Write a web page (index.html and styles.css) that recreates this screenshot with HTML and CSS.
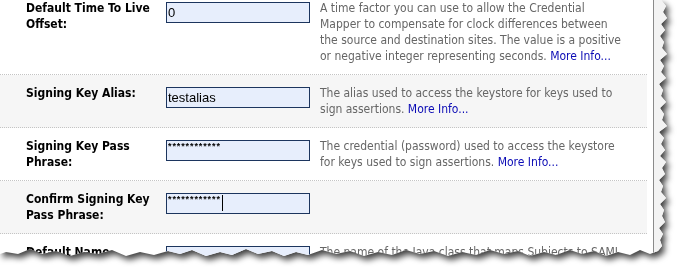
FILE: index.html
```html
<html lang="en">

<head>
  <meta charset="UTF-8">
  <meta name="viewport" content="width=device-width, initial-scale=1.0">
  <title>Credential Mapper Settings</title>
  <link rel="stylesheet" href="styles.css">
</head>

<body>
  <div class="sheet-shadow">
    <div class="sheet">
      <div class="form">
        <div class="row">
          <label class="field-label" for="ttl">Default Time To Live<br>Offset:</label>
          <div class="field"><input class="field-input" id="ttl" type="text" value="0"></div>
          <p class="field-help">A time factor you can use to allow the Credential<br>Mapper to compensate for clock differences between<br>the source and destination sites. The value is a positive<br>or negative integer representing seconds. <a href="#">More Info...</a></p>
        </div>
        <div class="row alt">
          <label class="field-label" for="alias">Signing Key Alias:</label>
          <div class="field"><input class="field-input" id="alias" type="text" value="testalias"></div>
          <p class="field-help">The alias used to access the keystore for keys used to<br>sign assertions. <a href="#">More Info...</a></p>
        </div>
        <div class="row">
          <label class="field-label" for="pass">Signing Key Pass<br>Phrase:</label>
          <div class="field"><input class="field-input pass" id="pass" type="text" value="************"></div>
          <p class="field-help">The credential (password) used to access the keystore<br>for keys used to sign assertions. <a href="#">More Info...</a></p>
        </div>
        <div class="row alt">
          <label class="field-label" for="confirm">Confirm Signing Key<br>Pass Phrase:</label>
          <div class="field"><input class="field-input pass" id="confirm" type="text" value="************"><span class="caret"></span></div>
          <p class="field-help"></p>
        </div>
        <div class="row">
          <label class="field-label" for="nameMapper">Default Name<br>Mapper Class Name:</label>
          <div class="field"><input class="field-input" id="nameMapper" type="text" value=""></div>
          <p class="field-help">The name of the Java class that maps Subjects to SAML<br>name identifiers. <a href="#">More Info...</a></p>
        </div>
      </div>
      <div class="gap"></div>
      <div class="scroll-track"></div>
    </div>
  </div>
</body>

</html>
```

FILE: styles.css
```css
body {
  margin: 0;
  background-color: white;
  overflow: hidden;
}

.sheet-shadow {
  width: 679px;
  height: 268px;
  filter: drop-shadow(3px 4px 3px rgba(0, 0, 0, 0.75));
}

.sheet {
  width: 679px;
  height: 268px;
  display: flex;
  flex-direction: row;
  align-items: stretch;
  background-color: white;
  overflow: hidden;
  clip-path: polygon(0 0, 661px 0, 666px 6px, 663px 12px, 667px 18px, 661px 24px, 665px 30px, 660px 36px, 664px 42px, 662px 48px, 667px 54px, 660px 60px, 664px 66px, 661px 72px, 666px 78px, 659px 84px, 663px 90px, 661px 96px, 666px 102px, 660px 108px, 664px 114px, 662px 120px, 667px 126px, 659px 132px, 664px 138px, 661px 144px, 665px 150px, 660px 156px, 666px 162px, 662px 168px, 665px 174px, 659px 180px, 663px 186px, 661px 192px, 666px 198px, 660px 204px, 664px 210px, 662px 216px, 665px 222px, 659px 228px, 663px 234px, 660px 240px, 662px 246px, 658px 251px, 650px 254px, 640px 250px, 630px 255px, 618px 252px, 606px 256px, 594px 251px, 582px 254px, 570px 250px, 556px 255px, 544px 252px, 530px 256px, 518px 251px, 504px 254px, 490px 250px, 476px 255px, 462px 252px, 448px 256px, 434px 251px, 420px 254px, 406px 250px, 392px 255px, 378px 252px, 364px 256px, 350px 251px, 336px 254px, 322px 250px, 308px 255px, 296px 252px, 284px 256px, 272px 251px, 258px 254px, 246px 249px, 232px 255px, 220px 252px, 206px 256px, 192px 250px, 180px 254px, 168px 251px, 154px 255px, 140px 252px, 126px 256px, 112px 250px, 98px 254px, 84px 252px, 70px 256px, 56px 251px, 42px 254px, 30px 249px, 18px 254px, 6px 252px, 0 254px);
}

.form {
  width: 647px;
  flex-shrink: 0;
  margin-top: -10px;
}

.gap {
  width: 6px;
  flex-shrink: 0;
}

.scroll-track {
  flex: 1;
  border-left: 1px solid #8a8a8a;
  background-color: #f3f3f3;
}

.row {
  display: grid;
  grid-template-columns: 166px 144px 1fr;
  padding: 10px 0;
  border-bottom: 1px dotted #c4c4c4;
  font-family: "DejaVu Sans Condensed", "DejaVu Sans", sans-serif;
  font-stretch: condensed;
  font-size: 12px;
  line-height: 16px;
  white-space: nowrap;
}

.alt {
  background-color: #f6f6f6;
}

.field-label {
  padding-left: 26px;
  font-weight: bold;
  color: black;
}

.field {
  position: relative;
}

.field-input {
  box-sizing: border-box;
  width: 144px;
  height: 21px;
  margin: 2px 0 0 0;
  padding: 0 1px;
  border: 1px solid #1c355e;
  background-color: #e7eefc;
  font-family: "Liberation Sans", Arial, sans-serif;
  font-size: 13px;
  color: black;
  outline: none;
}

.pass {
  padding-bottom: 9px;
  font-size: 9px;
  font-weight: bold;
  letter-spacing: 0.9px;
}

.caret {
  position: absolute;
  left: 56px;
  top: 4px;
  width: 1px;
  height: 16px;
  background-color: black;
}

.field-help {
  margin: 0;
  padding-left: 10px;
  color: #666666;
  overflow: hidden;
}

.field-help a {
  color: #0b0bb5;
  text-decoration: none;
}
```
